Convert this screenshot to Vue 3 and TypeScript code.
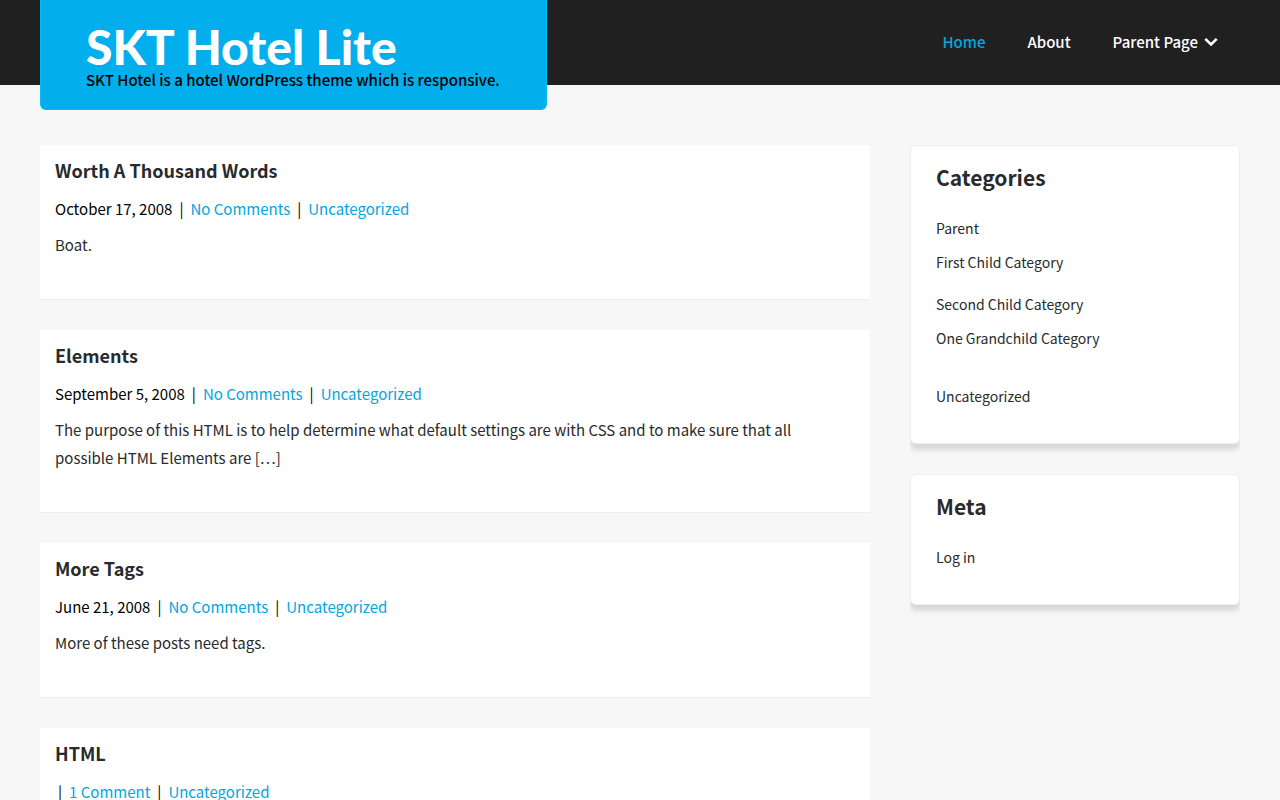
<script setup lang="ts">
interface Post {
  title: string
  date: string
  comments: string
  category: string
  excerpt: string
}

const posts: Post[] = [
  { title: 'Worth A Thousand Words', date: 'October 17, 2008', comments: 'No Comments', category: 'Uncategorized', excerpt: 'Boat.' },
  {
    title: 'Elements',
    date: 'September 5, 2008',
    comments: 'No Comments',
    category: 'Uncategorized',
    excerpt: 'The purpose of this HTML is to help determine what default settings are with CSS and to make sure that all possible HTML Elements are […]',
  },
  { title: 'More Tags', date: 'June 21, 2008', comments: 'No Comments', category: 'Uncategorized', excerpt: 'More of these posts need tags.' },
  { title: 'HTML', date: '', comments: '1 Comment', category: 'Uncategorized', excerpt: '' },
]
</script>

<template>
  <div class="page">
    <header class="header">
      <div class="container header-row">
        <div class="logo">
          <h1 class="site-title"><a href="#">SKT Hotel Lite</a></h1>
          <p class="tagline">SKT Hotel is a hotel WordPress theme which is responsive.</p>
        </div>
        <nav class="nav" aria-label="Main">
          <a href="#" class="active">Home</a>
          <a href="#">About</a>
          <a href="#" class="parent">
            Parent Page
            <svg class="chevron" viewBox="0 0 14 10" aria-hidden="true">
              <path d="M1.3 1.8 L7 7.5 L12.7 1.8" fill="none" stroke="currentColor" stroke-width="2.6" />
            </svg>
          </a>
        </nav>
      </div>
    </header>

    <div class="container content">
      <main class="posts">
        <article v-for="post in posts" :key="post.title" class="post">
          <h2><a href="#">{{ post.title }}</a></h2>
          <div class="meta">
            <span v-if="post.date" class="date">{{ post.date }}</span>
            <span class="sep">|</span>
            <a href="#">{{ post.comments }}</a>
            <span class="sep">|</span>
            <a href="#">{{ post.category }}</a>
          </div>
          <p class="excerpt">{{ post.excerpt }}</p>
        </article>
      </main>

      <aside class="sidebar">
        <div class="widget-clip">
          <section class="widget">
            <h3>Categories</h3>
            <ul>
              <li>
                <a href="#">Parent</a>
                <ul>
                  <li><a href="#">First Child Category</a></li>
                  <li>
                    <a href="#">Second Child Category</a>
                    <ul>
                      <li><a href="#">One Grandchild Category</a></li>
                    </ul>
                  </li>
                </ul>
              </li>
              <li><a href="#">Uncategorized</a></li>
            </ul>
          </section>
        </div>
        <div class="widget-clip">
          <section class="widget">
            <h3>Meta</h3>
            <ul>
              <li><a href="#">Log in</a></li>
            </ul>
          </section>
        </div>
      </aside>
    </div>
  </div>
</template>

<style>
body {
  margin: 0;
  background: #f7f7f7;
}
</style>

<style scoped>
.page {
  font-family: "Noto Sans CJK JP", "Noto Sans", sans-serif;
  font-size: 15px;
  line-height: 28px;
  color: #282a2b;
}

a {
  color: inherit;
  text-decoration: none;
}

h1, h2, h3, p, ul {
  margin: 0;
  padding: 0;
}

ul {
  list-style: none;
}

.container {
  max-width: 1200px;
  margin: 0 auto;
}

.header {
  background: #202020;
}

.header-row {
  display: flex;
  justify-content: space-between;
  align-items: flex-start;
}

.logo {
  box-sizing: border-box;
  padding: 24px 46px 18px 45px;
  margin-bottom: -25px;
  background: #02aeec;
  border: 1px solid #00bff3;
  border-top: 0;
  border-radius: 0 0 6px 6px;
}

.site-title {
  font-family: "Lato Black", Lato, sans-serif;
  font-size: 48px;
  font-weight: 900;
  line-height: 45px;
  color: #fff;
  white-space: nowrap;
}

.tagline {
  font-weight: 500;
  line-height: 22px;
  color: #000;
  white-space: nowrap;
}

.nav {
  display: flex;
  gap: 42px;
  padding: 28px 22px 0 0;
  font-weight: 500;
  color: #fff;
}

.nav a {
  white-space: nowrap;
}

.nav .active {
  color: #02a6e0;
}

.parent {
  display: flex;
  align-items: center;
  gap: 6px;
}

.chevron {
  width: 14px;
  height: 10px;
}

.content {
  display: flex;
  align-items: flex-start;
  gap: 40px;
  padding-top: 60px;
}

.posts {
  flex: 1;
  min-width: 0;
}

.post {
  padding: 13px 15px 40px;
  margin-bottom: 30px;
  background: #fff;
  border-bottom: 1px solid #ecedf2;
}

.post h2 {
  margin-bottom: 13px;
  font-size: 18px;
  font-weight: 700;
  line-height: 24px;
}

.meta {
  display: flex;
  gap: 4px;
  margin-bottom: 8px;
  color: #000;
}

.excerpt {
  padding-right: 30px;
}

.meta a {
  color: #02a6e0;
}

.sep {
  margin: 0 3px;
}

.sidebar {
  flex: 0 0 330px;
}

.widget-clip {
  overflow: hidden;
  padding-bottom: 12px;
  margin-bottom: 18px;
}

.widget {
  padding: 15px 25px 22px;
  background: #fff;
  border: 1px solid #edeef2;
  border-radius: 6px;
  box-shadow: 0 6px 5px #d8d8d8;
}

.widget h3 {
  margin-bottom: 18px;
  font-size: 21px;
  font-weight: 700;
  line-height: 32px;
}

.widget li {
  padding-bottom: 8px;
  font-size: 14px;
  line-height: 34px;
}

.widget li > a {
  display: block;
}
</style>
